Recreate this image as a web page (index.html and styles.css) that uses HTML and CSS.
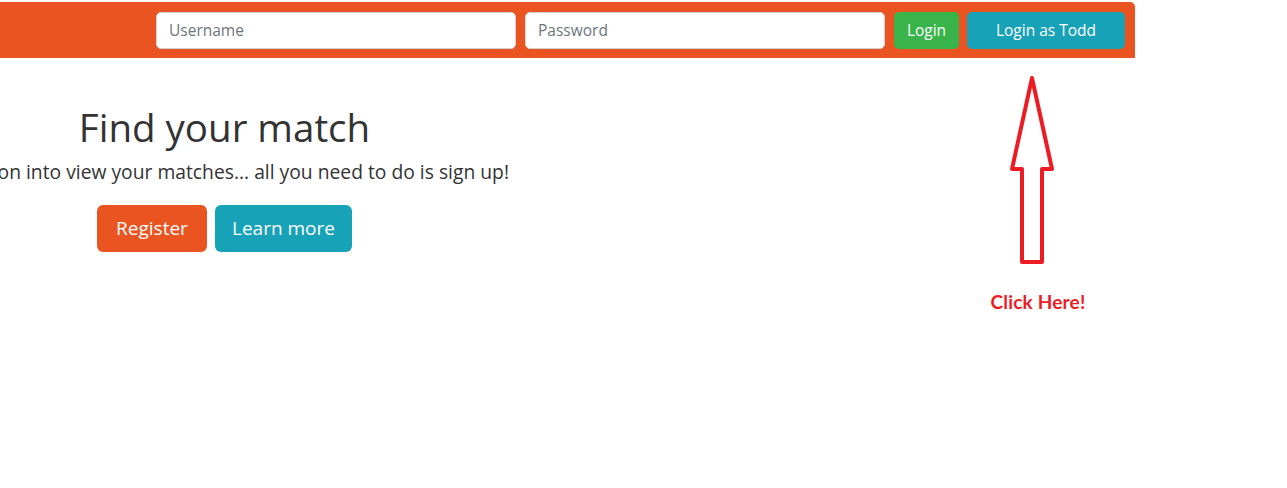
FILE: index.html
```html
<!DOCTYPE html>
<html lang="en">
<head>
<meta charset="utf-8">
<title>Find your match</title>
<link rel="stylesheet" href="styles.css">
</head>
<body>
<nav class="navbar">
  <form class="login-form">
    <input class="field" type="text" placeholder="Username">
    <input class="field" type="password" placeholder="Password">
    <button type="button" class="btn btn-login">Login</button>
    <button type="button" class="btn btn-todd">Login as Todd</button>
  </form>
</nav>
<main class="hero">
  <h1 class="hero-title">Find your match</h1>
  <div class="hero-lead"><span class="lead-text">on into view your matches... all you need to do is sign up!</span></div>
  <div class="hero-actions">
    <button type="button" class="btn-lg btn-register">Register</button>
    <button type="button" class="btn-lg btn-learn">Learn more</button>
  </div>
</main>
<div class="annotation">
  <svg class="arrow" width="50" height="192" viewBox="0 0 50 192">
    <path d="M22 2 L42 93 L32 93 L32 186 L12 186 L12 93 L2 93 Z" fill="none" stroke="#ed1c24" stroke-width="4" stroke-linejoin="round"/>
  </svg>
  <span class="click-here">Click Here!</span>
</div>
</body>
</html>
```

FILE: styles.css
```css
* { box-sizing: border-box; }

html, body {
  margin: 0;
  padding: 0;
  background: #ffffff;
}

body {
  font-family: "Open Sans", "Noto Sans", sans-serif;
  color: #333333;
  padding-top: 2px;
  position: relative;
  width: 1287px;
  height: 488px;
  overflow: hidden;
}

.navbar {
  width: 1135px;
  height: 56px;
  background: #e95420;
  border-top-right-radius: 5px;
  display: flex;
  align-items: flex-start;
  justify-content: flex-end;
  padding: 10px 10px 0 0;
}

.login-form {
  display: flex;
  align-items: center;
  gap: 9px;
  margin: 0;
}

.field {
  width: 360px;
  height: 37px;
  border: 1px solid #ced4da;
  border-radius: 5px;
  background: #ffffff;
  padding: 0 12px 2px;
  font-family: inherit;
  font-size: 15.5px;
  color: #495057;
}

.field::placeholder {
  color: #6c757d;
  opacity: 1;
}

.btn {
  height: 37px;
  border: 0;
  border-radius: 5px;
  color: #ffffff;
  font-family: inherit;
  font-size: 15.5px;
  padding: 0 0 2px;
}

.btn-login {
  width: 65px;
  background: #38b44a;
}

.btn-todd {
  width: 158px;
  margin-left: -1px;
  background: #17a2b8;
}

.hero {
  width: 449px;
  padding-top: 45px;
  display: flex;
  flex-direction: column;
  align-items: center;
}

.hero-title {
  margin: 0;
  font-size: 38.5px;
  font-weight: 400;
  line-height: 48px;
  color: #333333;
}

.hero-lead {
  width: 509px;
  align-self: flex-start;
  display: flex;
  justify-content: flex-end;
  margin-top: 6px;
  font-size: 19.3px;
  line-height: 30px;
}

.lead-text {
  white-space: nowrap;
}

.hero-actions {
  display: flex;
  gap: 8px;
  margin-top: 18px;
}

.btn-lg {
  height: 47px;
  border: 0;
  border-radius: 6px;
  color: #ffffff;
  font-family: inherit;
  font-size: 19px;
  padding: 0 0 2px;
}

.btn-register {
  width: 110px;
  background: #e95420;
}

.btn-learn {
  width: 137px;
  background: #17a2b8;
}

.annotation {
  position: absolute;
  left: 988px;
  top: 76px;
  width: 100px;
  display: flex;
  flex-direction: column;
  align-items: center;
}

.arrow {
  display: block;
  margin-left: -7px;
}

.click-here {
  margin-top: 22px;
  font-family: "Lato", "Open Sans", sans-serif;
  font-weight: 700;
  font-size: 19px;
  letter-spacing: 0.2px;
  color: #ed1c24;
}
```
